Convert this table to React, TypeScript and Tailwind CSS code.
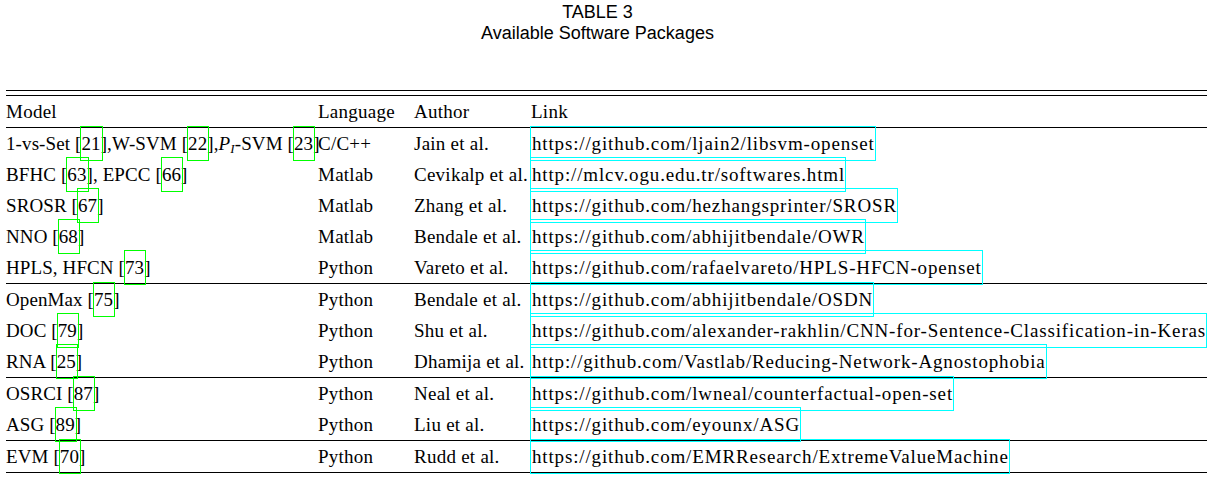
import type { ReactNode } from "react";

const Cite = ({ n }: { n: number }) => (
    <>
        [
        <span className="relative">
            {n}
            <span className="absolute -left-[1px] -right-[2px] -top-[7px] -bottom-[7px] border border-[#00ff00]" />
        </span>
        ]
    </>
);

const Url = ({ href }: { href: string }) => (
    <span className="relative tracking-[0.85px]">
        {href}
        <span className="absolute -left-[2px] -right-[1px] -top-[7px] -bottom-[7px] border border-[#00ffff]" />
    </span>
);

type Row = { model: ReactNode; lang: string; author: string; link: string };

const groups: Row[][] = [
    [
        {
            model: (
                <>
                    1-vs-Set <Cite n={21} />,W-SVM <Cite n={22} />,
                    <i>P</i>
                    <sub className="italic text-[13px]">I</sub>-SVM <Cite n={23} />
                </>
            ),
            lang: "C/C++",
            author: "Jain et al.",
            link: "https://github.com/ljain2/libsvm-openset",
        },
        {
            model: (
                <>
                    BFHC <Cite n={63} />, EPCC <Cite n={66} />
                </>
            ),
            lang: "Matlab",
            author: "Cevikalp et al.",
            link: "http://mlcv.ogu.edu.tr/softwares.html",
        },
        {
            model: (
                <>
                    SROSR <Cite n={67} />
                </>
            ),
            lang: "Matlab",
            author: "Zhang et al.",
            link: "https://github.com/hezhangsprinter/SROSR",
        },
        {
            model: (
                <>
                    NNO <Cite n={68} />
                </>
            ),
            lang: "Matlab",
            author: "Bendale et al.",
            link: "https://github.com/abhijitbendale/OWR",
        },
        {
            model: (
                <>
                    HPLS, HFCN <Cite n={73} />
                </>
            ),
            lang: "Python",
            author: "Vareto et al.",
            link: "https://github.com/rafaelvareto/HPLS-HFCN-openset",
        },
    ],
    [
        {
            model: (
                <>
                    OpenMax <Cite n={75} />
                </>
            ),
            lang: "Python",
            author: "Bendale et al.",
            link: "https://github.com/abhijitbendale/OSDN",
        },
        {
            model: (
                <>
                    DOC <Cite n={79} />
                </>
            ),
            lang: "Python",
            author: "Shu et al.",
            link: "https://github.com/alexander-rakhlin/CNN-for-Sentence-Classification-in-Keras",
        },
        {
            model: (
                <>
                    RNA <Cite n={25} />
                </>
            ),
            lang: "Python",
            author: "Dhamija et al.",
            link: "http://github.com/Vastlab/Reducing-Network-Agnostophobia",
        },
    ],
    [
        {
            model: (
                <>
                    OSRCI <Cite n={87} />
                </>
            ),
            lang: "Python",
            author: "Neal et al.",
            link: "https://github.com/lwneal/counterfactual-open-set",
        },
        {
            model: (
                <>
                    ASG <Cite n={89} />
                </>
            ),
            lang: "Python",
            author: "Liu et al.",
            link: "https://github.com/eyounx/ASG",
        },
    ],
    [
        {
            model: (
                <>
                    EVM <Cite n={70} />
                </>
            ),
            lang: "Python",
            author: "Rudd et al.",
            link: "https://github.com/EMRResearch/ExtremeValueMachine",
        },
    ],
];

const rowClass =
    "grid grid-cols-[312px_96px_117px_1fr] h-[31px] leading-[31px] whitespace-nowrap tracking-[0.25px]";

export default function App() {
    return (
        <div className="w-[1213px] h-[481px] bg-white text-black overflow-hidden">
            <div className="pt-[2px] pr-[18px] text-center font-['Liberation_Sans',Arial,sans-serif] text-[18px] leading-[21px]">
                <div>TABLE 3</div>
                <div>Available Software Packages</div>
            </div>

            <div className="mx-[6px] mt-[46px] font-['Liberation_Serif','Times_New_Roman',serif] text-[19px]">
                <div className="border-t border-black" />
                <div className="mt-[4px] border-t border-black" />
                <div className={rowClass}>
                    <div>Model</div>
                    <div>Language</div>
                    <div>Author</div>
                    <div>Link</div>
                </div>
                {groups.map((g, gi) => (
                    <div key={gi} className="border-t border-black">
                        {g.map((r, ri) => (
                            <div key={ri} className={rowClass}>
                                <div className="tracking-[0.1px]">{r.model}</div>
                                <div>{r.lang}</div>
                                <div>{r.author}</div>
                                <div className="pl-[1px]">
                                    <Url href={r.link} />
                                </div>
                            </div>
                        ))}
                    </div>
                ))}
                <div className="border-t border-black" />
            </div>
        </div>
    );
}
